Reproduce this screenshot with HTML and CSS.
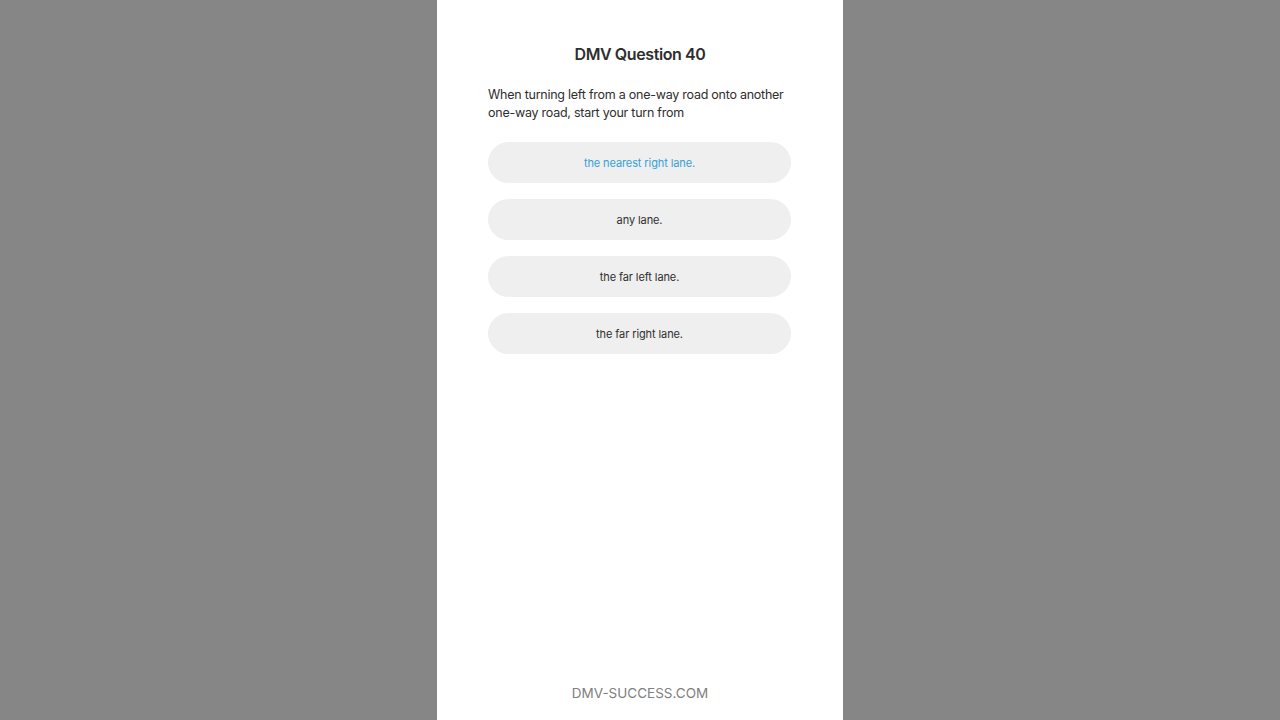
FILE: index.html
```html
<!DOCTYPE html>
<html>
<head>
<meta charset="utf-8">
<link rel="stylesheet" href="styles.css">
</head>
<body>
<div class="phone">
  <main class="content">
    <h1 class="title">DMV Question 40</h1>
    <p class="question">When turning left from a one-way road onto another one-way road, start your turn from</p>
    <div class="answers">
      <div class="answer answer-active">the nearest right lane.</div>
      <div class="answer">any lane.</div>
      <div class="answer">the far left lane.</div>
      <div class="answer">the far right lane.</div>
    </div>
  </main>
  <footer class="footer">DMV-SUCCESS.COM</footer>
</div>
</body>
</html>
```

FILE: styles.css
```css
html, body {
  margin: 0;
  padding: 0;
  height: 100%;
}
body {
  background: #868686;
  font-family: Inter, "Noto Sans", sans-serif;
  color: #2b2b2b;
}
.phone {
  width: 406px;
  height: 720px;
  margin: 0 auto;
  background: #ffffff;
  display: flex;
  flex-direction: column;
}
.content {
  flex: 1;
  padding: 44px 51px 0 51px;
}
.title {
  margin: 0;
  text-align: center;
  font-size: 16px;
  font-weight: 600;
  letter-spacing: -0.4px;
  line-height: 20px;
  color: #2e2e2e;
}
.question {
  margin: 22px 0 0 0;
  font-size: 12.5px;
  letter-spacing: -0.25px;
  line-height: 18px;
  color: #2e2e2e;
}
.answers {
  margin-top: 20px;
  display: flex;
  flex-direction: column;
  gap: 16px;
  width: 303px;
}
.answer {
  height: 41px;
  border-radius: 21px;
  background: #efefef;
  display: flex;
  align-items: center;
  justify-content: center;
  font-size: 11px;
  letter-spacing: -0.1px;
  color: #2e2e2e;
}
.answer-active {
  color: #33a2da;
}
.footer {
  text-align: center;
  font-size: 13.5px;
  color: #808080;
  padding-bottom: 19px;
}
```
